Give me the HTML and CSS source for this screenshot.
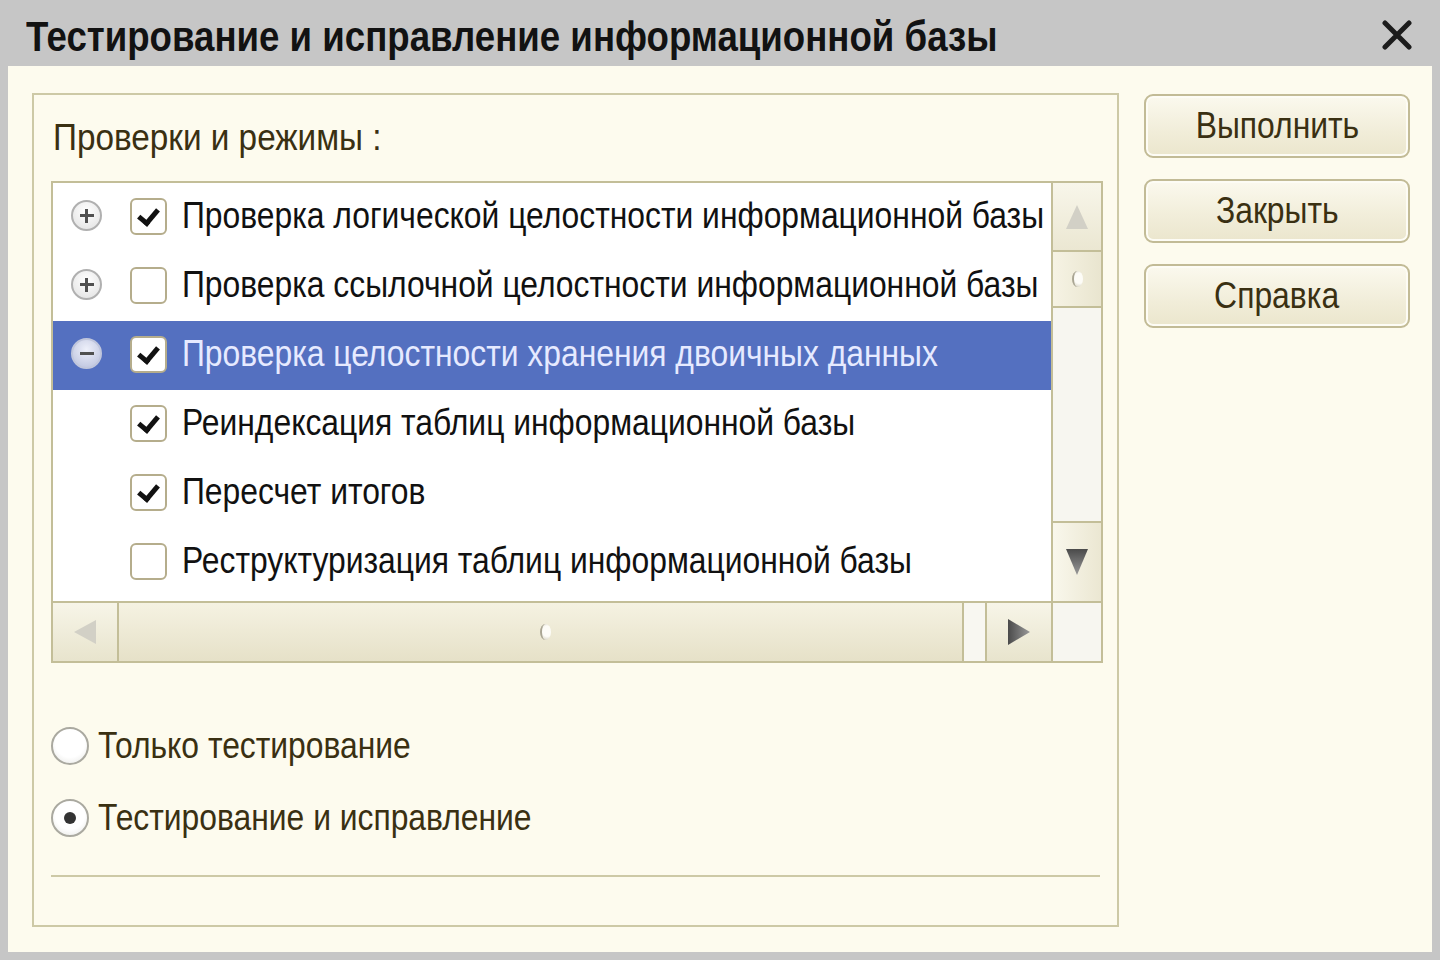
FILE: index.html
```html
<!DOCTYPE html>
<html lang="ru">
<head>
    <meta charset="UTF-8">
    <title>Тестирование и исправление информационной базы</title>
    <link rel="stylesheet" href="styles.css">
</head>
<body>
    <div class="window">
        <div class="titlebar">
            <h1><span class="narrow">Тестирование и исправление информационной базы</span></h1>
            <svg class="close" width="30" height="30" viewBox="0 0 30 30">
                <path d="M3 3 L27 27 M27 3 L3 27" stroke="#1c1c1c" stroke-width="5" stroke-linecap="round"/>
            </svg>
        </div>

        <div class="content">
            <div class="group">
                <div class="group-label"><span class="narrow">Проверки и режимы :</span></div>

                <div class="table">
                    <div class="table-main">
                        <div class="rows">
                            <div class="row">
                                <span class="toggle plus"></span>
                                <span class="check on"></span>
                                <span class="text narrow">Проверка логической целостности информационной базы</span>
                            </div>
                            <div class="row">
                                <span class="toggle plus"></span>
                                <span class="check"></span>
                                <span class="text narrow">Проверка ссылочной целостности информационной базы</span>
                            </div>
                            <div class="row selected">
                                <span class="toggle minus"></span>
                                <span class="check on"></span>
                                <span class="text narrow">Проверка целостности хранения двоичных данных</span>
                            </div>
                            <div class="row">
                                <span class="toggle none"></span>
                                <span class="check on"></span>
                                <span class="text narrow">Реиндексация таблиц информационной базы</span>
                            </div>
                            <div class="row">
                                <span class="toggle none"></span>
                                <span class="check on"></span>
                                <span class="text narrow">Пересчет итогов</span>
                            </div>
                            <div class="row">
                                <span class="toggle none"></span>
                                <span class="check"></span>
                                <span class="text narrow">Реструктуризация таблиц информационной базы</span>
                            </div>
                        </div>

                        <div class="vscroll">
                            <div class="sb-btn up">
                                <svg width="24" height="26" viewBox="0 0 24 26"><path d="M12 1 L23 25 L1 25 Z" fill="#d2d0c6"/></svg>
                            </div>
                            <div class="sb-thumb v"><span class="grip"></span></div>
                            <div class="sb-track"></div>
                            <div class="sb-btn down">
                                <svg width="24" height="28" viewBox="0 0 24 28">
                                    <defs><linearGradient id="gd" x1="0" y1="0" x2="0" y2="1"><stop offset="0" stop-color="#4a4a4a"/><stop offset="1" stop-color="#9a9a9a"/></linearGradient></defs>
                                    <path d="M1 1 L23 1 L12 27 Z" fill="url(#gd)"/>
                                </svg>
                            </div>
                        </div>
                    </div>

                    <div class="hscroll">
                        <div class="sb-btn left">
                            <svg width="24" height="26" viewBox="0 0 24 26"><path d="M1 13 L23 1 L23 25 Z" fill="#d2d0c6"/></svg>
                        </div>
                        <div class="sb-thumb h"><span class="grip"></span></div>
                        <div class="sb-gap"></div>
                        <div class="sb-btn right">
                            <svg width="24" height="28" viewBox="0 0 24 28">
                                <defs><linearGradient id="gr" x1="0" y1="0" x2="1" y2="0"><stop offset="0" stop-color="#4a4a4a"/><stop offset="1" stop-color="#9a9a9a"/></linearGradient></defs>
                                <path d="M1 1 L23 14 L1 27 Z" fill="url(#gr)"/>
                            </svg>
                        </div>
                        <div class="sb-corner"></div>
                    </div>
                </div>

                <div class="modes">
                    <label class="radio"><span class="dot"></span><span class="narrow">Только тестирование</span></label>
                    <label class="radio"><span class="dot on"></span><span class="narrow">Тестирование и исправление</span></label>
                </div>

                <div class="separator"></div>
            </div>

            <div class="actions">
                <button type="button"><span class="narrow">Выполнить</span></button>
                <button type="button"><span class="narrow">Закрыть</span></button>
                <button type="button"><span class="narrow">Справка</span></button>
            </div>
        </div>
    </div>
</body>
</html>
```

FILE: styles.css
```css
body {
    margin: 0;
    font-family: "Liberation Sans", Arial, sans-serif;
}
/* the platform font is a narrow sans */
.narrow {
    display: inline-block;
    white-space: nowrap;
    transform: scaleX(0.86);
    transform-origin: left center;
}
.window {
    width: 1440px;
    height: 960px;
    background-color: #c6c6c6;
    display: flex;
    flex-direction: column;
    box-sizing: border-box;
    padding: 0 8px 8px 8px;
}
.titlebar {
    height: 66px;
    display: flex;
    align-items: center;
    justify-content: space-between;
    padding: 0 20px 0 18px;
}
.titlebar h1 {
    margin: 0;
    padding-top: 7px;
    font-weight: bold;
    font-size: 42px;
    color: #121212;
    flex: 1;
    overflow: hidden;
}
.titlebar h1 .narrow {
    transform: scaleX(0.872);
}
.close {
    margin-top: 4px;
}
.content {
    flex: 1;
    background-color: #fdfbee;
    display: flex;
    align-items: flex-start;
    padding: 27px 22px 0 24px;
    gap: 25px;
}

/* group box with the list */
.group {
    width: 1087px;
    height: 834px;
    flex-shrink: 0;
    box-sizing: border-box;
    border: 2px solid #cdc9a6;
    padding: 0 16px 0 17px;
}
.group-label {
    font-size: 37px;
    color: #3a3012;
    height: 86px;
    line-height: 86px;
    padding-left: 2px;
}
.group-label .narrow {
    transform: scaleX(0.9);
}
.table {
    border: 2px solid #c3be98;
    background-color: #fff;
    width: 1052px;
    box-sizing: border-box;
}
.table-main {
    display: flex;
    height: 418px;
}
.rows {
    flex: 1;
    min-width: 0;
    overflow: hidden;
}
.row {
    height: 69px;
    display: flex;
    align-items: center;
    font-size: 37px;
    color: #111;
}
.row.selected {
    background-color: #5470c0;
    color: #e6eaff;
}
.row .text {
    margin-left: 15px;
    margin-top: -3px;
}
.toggle {
    width: 31px;
    height: 31px;
    flex-shrink: 0;
    margin-left: 18px;
    margin-right: 28px;
    margin-top: -4px;
    border-radius: 50%;
    box-sizing: border-box;
    position: relative;
}
.toggle.plus, .toggle.minus {
    border: 2px solid #b0b0b0;
    background: radial-gradient(circle at 50% 35%, #ffffff, #e0e0e0);
}
.toggle.minus {
    border-color: #c0c6dc;
    background: radial-gradient(circle at 50% 35%, #eef0fa, #b9c0dc);
}
.toggle.plus::before, .toggle.minus::before {
    content: "";
    position: absolute;
    left: 6.5px;
    top: 12px;
    width: 14px;
    height: 3px;
    background-color: #505050;
}
.toggle.plus::after {
    content: "";
    position: absolute;
    left: 12px;
    top: 6.5px;
    width: 3px;
    height: 14px;
    background-color: #505050;
}
.check {
    width: 37px;
    height: 37px;
    flex-shrink: 0;
    box-sizing: border-box;
    border: 2px solid #b5ad8c;
    border-radius: 6px;
    background-color: #fff;
    position: relative;
    margin-top: -3px;
}
.check.on::after {
    content: "";
    position: absolute;
    left: 10px;
    top: 5px;
    width: 8px;
    height: 15px;
    border-right: 5px solid #111;
    border-bottom: 5px solid #111;
    transform: rotate(40deg);
}

/* scrollbars */
.vscroll {
    width: 50px;
    flex-shrink: 0;
    box-sizing: border-box;
    border-left: 2px solid #c3be98;
    display: flex;
    flex-direction: column;
    background-color: #f7f6f0;
}
.sb-btn {
    display: flex;
    align-items: center;
    justify-content: center;
    background: linear-gradient(to bottom, #f8f6ea, #ebe7d2);
}
.vscroll .sb-btn.up {
    height: 67px;
    border-bottom: 2px solid #c3be98;
}
.vscroll .sb-btn.down {
    height: 78px;
    border-top: 2px solid #c3be98;
    background: linear-gradient(to right, #f9f7ec, #ebe7d2);
}
.sb-thumb {
    display: flex;
    align-items: center;
    justify-content: center;
    background: linear-gradient(to right, #f6f3e4, #e9e5cf);
}
.sb-thumb.v {
    height: 54px;
    border-bottom: 2px solid #c3be98;
}
.sb-track {
    flex: 1;
}
/* small embossed grip on the thumb */
.grip {
    width: 11px;
    height: 16px;
    box-sizing: border-box;
    border-radius: 50%;
    border-left: 2px solid #a9a593;
    background: radial-gradient(circle at 60% 45%, #fdfcf7 50%, #cfcbb8);
}
.hscroll {
    height: 58px;
    border-top: 2px solid #c3be98;
    display: flex;
}
.hscroll .sb-btn.left {
    width: 64px;
    border-right: 2px solid #c3be98;
    background: linear-gradient(to bottom, #f7f5e8, #e8e4cd);
}
.sb-thumb.h {
    flex: 1;
    background: linear-gradient(to bottom, #f5f2e2, #e6e1c8);
    border-right: 2px solid #c3be98;
}
.sb-thumb.h .grip {
    margin-left: 10px;
}
.sb-gap {
    width: 21px;
    background-color: #f8f7f1;
    border-right: 2px solid #c3be98;
}
.hscroll .sb-btn.right {
    width: 64px;
    border-right: 2px solid #c3be98;
    background: linear-gradient(to bottom, #f7f5e8, #e8e4cd);
}
.sb-corner {
    width: 48px;
    background-color: #f7f6f0;
}

/* mode switch */
.modes {
    margin-top: 62px;
    display: flex;
    flex-direction: column;
    gap: 31px;
}
.radio {
    display: flex;
    align-items: center;
    font-size: 37px;
    color: #3a3012;
    height: 41px;
}
.dot {
    width: 38px;
    height: 38px;
    flex-shrink: 0;
    box-sizing: border-box;
    border: 2px solid #aaa9a0;
    border-radius: 50%;
    background: radial-gradient(circle at 50% 40%, #ffffff 55%, #e4e4e0);
    margin-right: 9px;
    position: relative;
}
.dot.on::after {
    content: "";
    position: absolute;
    left: 11px;
    top: 11px;
    width: 12px;
    height: 12px;
    border-radius: 50%;
    background-color: #333;
}
.separator {
    margin-top: 37px;
    width: 1049px;
    border-top: 2px solid #cdc9a6;
}

/* command buttons */
.actions {
    display: flex;
    flex-direction: column;
    gap: 21px;
    padding-top: 1px;
}
.actions button {
    width: 266px;
    height: 64px;
    border: 2px solid #c2bb96;
    border-radius: 9px;
    background: linear-gradient(to bottom, #fbf9ee, #f1edd9 60%, #ebe6cd);
    box-shadow: inset 0 0 0 2px #fdfcf5;
    font-family: inherit;
    font-size: 36px;
    color: #3a3012;
    padding: 0;
    cursor: pointer;
}
.actions button .narrow {
    transform: scaleX(0.885);
    transform-origin: center center;
}
```
